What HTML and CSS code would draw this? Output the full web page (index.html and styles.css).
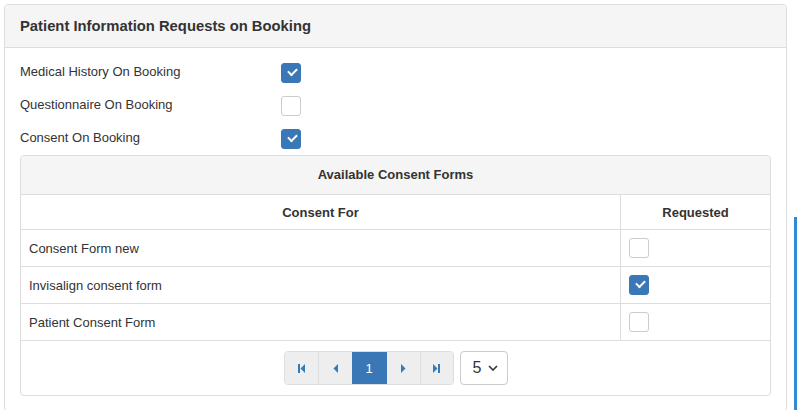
FILE: index.html
```html
<!DOCTYPE html>
<html lang="en">
  <head>
    <meta charset="UTF-8" />
    <meta name="viewport" content="width=device-width, initial-scale=1.0" />
    <title>Patient Information Requests on Booking</title>
    <link rel="stylesheet" href="styles.css">
  </head>
  <body>
    <div class="panel">
      <div class="panel-heading">Patient Information Requests on Booking</div>

      <div class="panel-body">
        <!-- Booking options -->
        <div class="option">
          <span class="option-label">Medical History On Booking</span>
          <span class="check checked"></span>
        </div>
        <div class="option">
          <span class="option-label">Questionnaire On Booking</span>
          <span class="check"></span>
        </div>
        <div class="option">
          <span class="option-label">Consent On Booking</span>
          <span class="check checked"></span>
        </div>

        <div class="sub-panel">
          <div class="sub-heading">Available Consent Forms</div>
          <table class="forms">
            <thead>
              <tr>
                <th class="col-name">Consent For</th>
                <th class="col-req">Requested</th>
              </tr>
            </thead>
            <tbody>
              <tr>
                <td>Consent Form new</td>
                <td class="col-req"><span class="check"></span></td>
              </tr>
              <tr>
                <td>Invisalign consent form</td>
                <td class="col-req"><span class="check checked"></span></td>
              </tr>
              <tr>
                <td>Patient Consent Form</td>
                <td class="col-req"><span class="check"></span></td>
              </tr>
            </tbody>
          </table>

          <div class="pager">
            <div class="pages">
              <span class="page-btn">
                <svg width="7" height="9" viewBox="0 0 7 9"><rect x="0" y="0" width="2" height="9" fill="#337ab7"/><path d="M7 0 L2.5 4.5 L7 9 Z" fill="#337ab7"/></svg>
              </span>
              <span class="page-btn">
                <svg width="5" height="9" viewBox="0 0 5 9"><path d="M5 0 L0.5 4.5 L5 9 Z" fill="#337ab7"/></svg>
              </span>
              <span class="page-btn active">1</span>
              <span class="page-btn">
                <svg width="5" height="9" viewBox="0 0 5 9"><path d="M0 0 L4.5 4.5 L0 9 Z" fill="#337ab7"/></svg>
              </span>
              <span class="page-btn">
                <svg width="7" height="9" viewBox="0 0 7 9"><path d="M0 0 L4.5 4.5 L0 9 Z" fill="#337ab7"/><rect x="5" y="0" width="2" height="9" fill="#337ab7"/></svg>
              </span>
            </div>
            <div class="page-size">
              <span>5</span>
              <svg width="10" height="6" viewBox="0 0 10 6"><path d="M1 1 L5 5 L9 1" fill="none" stroke="#333" stroke-width="1.6"/></svg>
            </div>
          </div>
        </div>
      </div>
    </div>

    <div class="scroll-thumb"></div>
  </body>
</html>
```

FILE: styles.css
```css
body {
  font-family: "Liberation Sans", Arial, sans-serif;
  font-size: 13px;
  color: #333;
  background-color: #fff;
  margin: 0;
  padding: 4px 10px 0 4px;
}

.panel {
  border: 1px solid #ddd;
  border-radius: 4px;
  background-color: #fff;
}

.panel-heading {
  background-color: #f5f5f5;
  border-bottom: 1px solid #ddd;
  border-radius: 4px 4px 0 0;
  height: 42px;
  line-height: 42px;
  padding: 0 15px;
  font-size: 14.8px;
  font-weight: bold;
}

.panel-body {
  padding: 15px 15px 15px 15px;
  display: flex;
  flex-direction: column;
  gap: 13px;
}

.option {
  display: flex;
  align-items: flex-start;
  height: 20px;
}

.option-label {
  width: 261px;
  line-height: 17px;
}

.check {
  display: inline-block;
  box-sizing: border-box;
  width: 20px;
  height: 20px;
  border: 1px solid #ccc;
  border-radius: 3px;
  background-color: #fff;
  vertical-align: middle;
  position: relative;
}

.check.checked {
  background-color: #3a77b7;
  border-color: #3a77b7;
}

/* white tick */
.check.checked::after {
  content: "";
  position: absolute;
  left: 6px;
  top: 4px;
  width: 7px;
  height: 4px;
  border-left: 2px solid #fff;
  border-bottom: 2px solid #fff;
  transform: rotate(-45deg);
}

.sub-panel {
  border: 1px solid #ddd;
  border-radius: 4px;
  margin-top: -7px;
}

.sub-heading {
  background-color: #f5f5f5;
  border-bottom: 1px solid #ddd;
  border-radius: 4px 4px 0 0;
  height: 38px;
  line-height: 38px;
  text-align: center;
  font-weight: bold;
}

.forms {
  width: 100%;
  border-collapse: collapse;
}

.forms th {
  height: 34px;
  padding: 0 8px;
  font-weight: bold;
  text-align: center;
  border-bottom: 1px solid #ddd;
}

.forms td {
  height: 36px;
  padding: 0 8px;
  border-bottom: 1px solid #ddd;
}

.forms .col-req {
  width: 133px;
  border-left: 1px solid #ddd;
}

.forms td.col-req {
  text-align: left;
}

.forms td .check {
  margin-top: -1px;
}

.pager {
  display: flex;
  justify-content: center;
  align-items: center;
  gap: 6px;
  height: 54px;
}

.pages {
  display: flex;
  border: 1px solid #ddd;
  border-radius: 4px;
  overflow: hidden;
  height: 32px;
}

.page-btn {
  display: flex;
  align-items: center;
  justify-content: center;
  box-sizing: border-box;
  width: 34px;
  height: 32px;
  background-color: #eee;
  border-left: 1px solid #ddd;
  color: #fff;
}

.page-btn:first-child,
.page-btn:last-child {
  width: 33px;
}

.page-btn:first-child {
  border-left: none;
}

.page-btn.active {
  background-color: #3a77b7;
  border-left-color: #3a77b7;
}

.page-btn.active + .page-btn {
  border-left-color: #3a77b7;
}

.page-size {
  display: flex;
  align-items: center;
  gap: 7px;
  box-sizing: border-box;
  width: 48px;
  height: 34px;
  padding-left: 12px;
  border: 1px solid #ccc;
  border-radius: 4px;
  font-size: 16px;
}

.scroll-thumb {
  position: fixed;
  right: 0;
  top: 217px;
  width: 3px;
  bottom: 0;
  background-color: #2d8bd8;
}
```
